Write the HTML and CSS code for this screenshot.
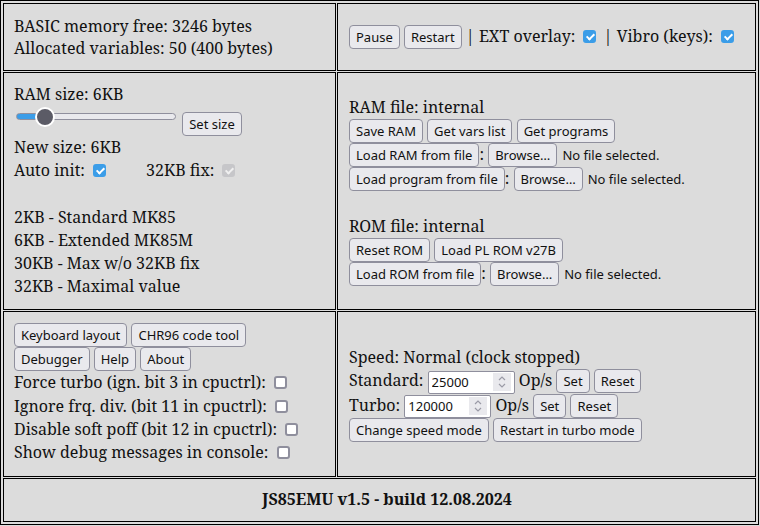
FILE: index.html
```html
<!DOCTYPE html>
<html lang="en">
<head>
<meta charset="utf-8">
<title>JS85EMU</title>
<link rel="stylesheet" href="styles.css">
</head>
<body>
<table class="panel">
  <colgroup><col class="col-left"><col class="col-right"></colgroup>
  <tr class="row1">
    <td class="cell tight">BASIC memory free: 3246 bytes<br>Allocated variables: 50 (400 bytes)</td>
    <td class="cell"><button class="btn">Pause</button> <button class="btn">Restart</button> | EXT overlay: <input type="checkbox" class="cb" checked> | Vibro (keys): <input type="checkbox" class="cb" checked></td>
  </tr>
  <tr class="row2">
    <td class="cell">RAM size: 6KB<br><input type="range" class="slider" min="2" max="32" step="1" value="6" style="--p:18%"> <button class="btn">Set size</button><br>New size: 6KB<br>Auto init: <input type="checkbox" class="cb" checked><span class="spacer"></span>32KB fix: <input type="checkbox" class="cb" checked disabled><br><br>2KB - Standard MK85<br>6KB - Extended MK85M<br>30KB - Max w/o 32KB fix<br>32KB - Maximal value</td>
    <td class="cell">RAM file: internal<br><button class="btn">Save RAM</button> <button class="btn">Get vars list</button> <button class="btn">Get programs</button><br><button class="btn">Load RAM from file</button>: <span class="file"><button class="btn file-btn">Browse…</button>No file selected.</span><br><button class="btn">Load program from file</button>: <span class="file"><button class="btn file-btn">Browse…</button>No file selected.</span><br><br>ROM file: internal<br><button class="btn">Reset ROM</button> <button class="btn">Load PL ROM v27B</button><br><button class="btn">Load ROM from file</button>: <span class="file"><button class="btn file-btn">Browse…</button>No file selected.</span></td>
  </tr>
  <tr class="row3">
    <td class="cell"><button class="btn">Keyboard layout</button> <button class="btn">CHR96 code tool</button><br><button class="btn">Debugger</button> <button class="btn">Help</button> <button class="btn">About</button><br>Force turbo (ign. bit 3 in cpuctrl): <input type="checkbox" class="cb"><br>Ignore frq. div. (bit 11 in cpuctrl): <input type="checkbox" class="cb"><br>Disable soft poff (bit 12 in cpuctrl): <input type="checkbox" class="cb"><br>Show debug messages in console: <input type="checkbox" class="cb"></td>
    <td class="cell">Speed: Normal (clock stopped)<br>Standard: <span class="num"><input type="number" class="num-input" value="25000"><span class="spin"><svg width="18" height="18" viewBox="0 0 18 18"><path d="M6 7 L9 4 L12 7" fill="none" stroke="#9a9aa6" stroke-width="1.2"/><path d="M6 11 L9 14 L12 11" fill="none" stroke="#9a9aa6" stroke-width="1.2"/></svg></span></span> Op/s <button class="btn">Set</button> <button class="btn">Reset</button><br>Turbo: <span class="num"><input type="number" class="num-input" value="120000"><span class="spin"><svg width="18" height="18" viewBox="0 0 18 18"><path d="M6 7 L9 4 L12 7" fill="none" stroke="#9a9aa6" stroke-width="1.2"/><path d="M6 11 L9 14 L12 11" fill="none" stroke="#9a9aa6" stroke-width="1.2"/></svg></span></span> Op/s <button class="btn">Set</button> <button class="btn">Reset</button><br><button class="btn">Change speed mode</button> <button class="btn">Restart in turbo mode</button></td>
  </tr>
  <tr class="row4">
    <td class="cell footer" colspan="2">JS85EMU v1.5 - build 12.08.2024</td>
  </tr>
</table>
</body>
</html>
```
FILE: styles.css
```css
html, body {
  margin: 0;
  padding: 0;
  background: #dcdcdc;
}
body {
  font-family: "Noto Serif", serif;
  font-size: 16px;
  line-height: 23.3px;
  color: #111;
}
.panel {
  width: 759px;
  table-layout: fixed;
  border: 1px solid #000;
  padding: 1px;
  border-spacing: 1px;
}
.col-left { width: 333px; }
.col-right { width: 419px; }
.row1 { height: 68px; }
.row2 { height: 238px; }
.row3 { height: 166px; }
.row4 { height: 44px; }
.cell {
  border: 1px solid #000;
  padding: 0 10px;
  vertical-align: middle;
}
.cell + .cell { padding-left: 11px; }
.tight { line-height: 22px; }
.footer {
  text-align: center;
  font-weight: bold;
  padding-left: 25px;
}
.btn {
  font-family: "Noto Sans", sans-serif;
  font-size: 13px;
  line-height: 18px;
  color: #111;
  background: #e9e9ed;
  border: 1px solid #8f8f9d;
  border-radius: 4px;
  padding: 2px 6px;
  margin: 0;
}
.file {
  font-family: "Noto Sans", sans-serif;
  font-size: 13px;
}
.file-btn { margin-right: 5px; }
.cb {
  -webkit-appearance: none;
  appearance: none;
  position: relative;
  box-sizing: border-box;
  width: 13px;
  height: 13px;
  margin: 3px 3px 3px 4px;
  border: 2px solid #8f8f9d;
  border-radius: 3px;
  background: #fff;
  vertical-align: -4px;
}
.cb:checked {
  background: #3b9de8;
  border-color: #3b9de8;
}
.cb:checked::after {
  content: "";
  position: absolute;
  left: 2.5px;
  top: 0px;
  width: 3px;
  height: 6px;
  border: solid #fff;
  border-width: 0 2px 2px 0;
  transform: rotate(45deg);
}
.cb:disabled:checked {
  background: #c6c6c9;
  border-color: #c6c6c9;
}
.cb:disabled:checked::after { border-color: #f0f0f0; }
.spacer {
  display: inline-block;
  width: 37px;
}
.slider {
  -webkit-appearance: none;
  appearance: none;
  width: 160px;
  height: 20px;
  margin: 0 2px;
  background: transparent;
  vertical-align: 2px;
}
.slider::-webkit-slider-runnable-track {
  height: 7px;
  box-sizing: border-box;
  border: 1px solid #8f8f9d;
  border-radius: 4px;
  background: linear-gradient(to right, #3b9de8 var(--p), #e9e9ed var(--p));
}
.slider::-webkit-slider-thumb {
  -webkit-appearance: none;
  appearance: none;
  box-sizing: border-box;
  width: 20px;
  height: 20px;
  margin-top: -7.5px;
  border-radius: 50%;
  background: #5b5b66;
  border: 2px solid #fff;
}
.num {
  display: inline-flex;
  align-items: center;
  box-sizing: border-box;
  width: 87px;
  height: 23px;
  background: #fff;
  border: 1px solid #8f8f9d;
  border-radius: 2px;
  vertical-align: middle;
}
.num-input {
  -moz-appearance: textfield;
  appearance: textfield;
  width: 60px;
  flex: 1;
  min-width: 0;
  border: 0;
  outline: 0;
  padding: 0 0 0 3px;
  margin: 0;
  background: transparent;
  font-family: "Noto Sans", sans-serif;
  font-size: 13px;
  color: #111;
}
.num-input::-webkit-inner-spin-button,
.num-input::-webkit-outer-spin-button {
  -webkit-appearance: none;
  margin: 0;
}
.spin {
  display: flex;
  align-items: center;
  justify-content: center;
  width: 18px;
  height: 18px;
  margin-right: 3px;
  background: #e9e9ed;
}
```
